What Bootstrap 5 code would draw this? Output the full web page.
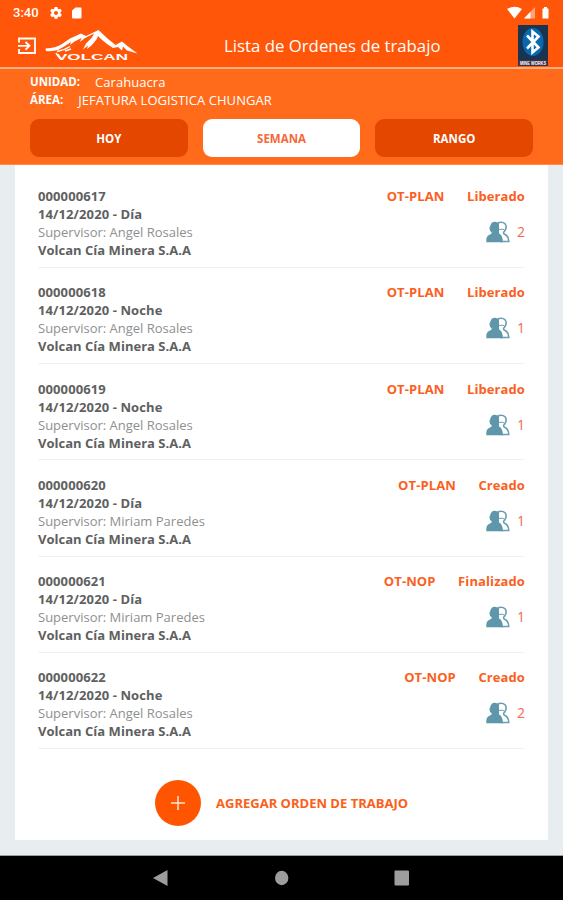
<!DOCTYPE html>
<html lang="es">
<head>
<meta charset="utf-8">
<meta name="viewport" content="width=device-width, initial-scale=1">
<title>Lista de Ordenes de trabajo</title>
<link rel="stylesheet" href="https://cdn.jsdelivr.net/npm/bootstrap@5.3.0/dist/css/bootstrap.min.css">
<style>
body{font-family:"Open Sans","Noto Sans",sans-serif;font-size:13px;line-height:18px;background:#e8eeef;height:900px;overflow:hidden}
svg{display:block;flex:none}
.topbar{background:#ff560a;height:69px;border-bottom:2px solid #ffae84}
.status{height:24px;padding:1px 13px 0;font:500 13px/22px Roboto,sans-serif}
.titlebar{height:43px;padding:0 14px 0 17px}
.titlebar h1{font-size:16.8px;line-height:22px;margin:0 0 0 85px;font-weight:400}
.logo{margin-left:8px}
.filters{background:#ff6b1a;height:96px;padding:4px 30px 0;border-bottom:1px solid #ff8a4c}
.filters .info b{font-size:11.5px}
.filters .info span{margin-left:15px;margin-top:-.5px;letter-spacing:.05px}
.btns{gap:15px;margin-top:10px}
.filters .btn{height:38px;border-radius:9px;border:0;background:#e44700;color:#fff;font-size:11.5px;font-weight:700;padding:2px 0 0}
.filters .btn.active{background:#fff;color:#f4683a}
.sheet{background:#fff;height:675px;margin:0 15px;padding:7px 23px 0}
.order{height:96.15px;padding-top:15.3px;border-bottom:1px solid #f1f1f2;color:#606060}
.order b{letter-spacing:.1px}
.order .firm{letter-spacing:.02px}
.sup{color:#8f8f8f}
.tone{color:#fb6022}
.tags{gap:22.5px;letter-spacing:.1px}
.count{color:#f4694a;font-size:14px;margin-top:16px;height:22px}
.people{margin-right:7px}
.add{gap:15px;margin-top:31px;height:46px;padding-left:117px;color:#fb6018;font-weight:700;font-size:13px}
.plus{width:46px;height:46px;background:#ff5500}
.navkeys{background:#000;height:45px;margin-top:15px;border-top:1px solid #9ba0a1}
</style>
<script src="https://cdn.jsdelivr.net/npm/bootstrap@5.3.0/dist/js/bootstrap.bundle.min.js"></script>
</head>
<body>
<header class="topbar text-white">
  <div class="status d-flex align-items-center">
    <span>3:40</span>
    <svg class="ms-2" width="62" height="14" viewBox="-2 0 62 14" fill="#fff"><path fill-rule="evenodd" d="M5.600 1h2.800l.4 1.700 1 .6 1.700-.6 1.300 2.300-1.300 1.300v1.200l1.300 1.300-1.300 2.300-1.700-.6-1 .6-.4 1.700H5.600l-.4-1.700-1-.6-1.700.6-1.300-2.300 1.300-1.300V6.300L1.200 5l1.300-2.300 1.700.6 1-.6zM7 4.900a2 2 0 1 0 .01 0z"/><path d="M26.500 1.500h5q1 0 1 1v9q0 1-1 1h-7.500q-1 0-1-1V4.500z"/></svg>
    <svg class="ms-auto" width="44" height="14" viewBox="-1 0 44 14" fill="#fff"><path d="M0 3Q7.500-1.500 15 3L7.500 12.500z"/><path fill-opacity=".45" d="M28 1v11.500H17z"/><path d="M23.500 5.700v6.800H17z"/><path d="M35.500 2.500H37V1h3v1.500h1.500v10h-6z"/></svg>
  </div>
  <div class="titlebar d-flex align-items-center">
    <svg width="20" height="20" viewBox="0 0 20 20" fill="none" stroke="#fff" stroke-width="1.800"><path d="M2 6.500V2.500h16v14.500H2V13"/><path d="M1 9.800h11M8.500 6l4 3.800-4 3.800"/></svg>
    <svg class="logo" width="94" height="34" viewBox="45 29 94 34" fill="#fff"><path d="M45.500 48.500Q56 48 62 44L70 38.500 81 33.500l5 2.500L98.500 30l9 8.500 8 6.500 6.500-3.500 6 5 9.500 7-10.500-3-4-4-1 4-4-3.500-5 1-6-4-6-5-3-3-1.500 3.500-5 6-4.500 3.500 1-3.500-5 4 3-6 6-6 2-4-9 4.500-5 4 1.500-4-7 3.500-4.500 3.500 1-3-6 4-7 4q-5 1.500-12 1z"/><path d="M57 51.500q7-1 13-5M56 53q2 4 6 6M65 51l6-2" fill="none" stroke="#fff" stroke-width="1.500"/><text x="56" y="60" font-family="Liberation Sans, sans-serif" font-size="8.500" font-weight="700" textLength="72" lengthAdjust="spacingAndGlyphs">VOLCAN</text></svg>
    <h1>Lista de Ordenes de trabajo</h1>
    <svg class="ms-auto" width="32" height="41" viewBox="0 0 32 41"><path fill="#193451" d="M1 0h30v41H1z"/><ellipse cx="16" cy="17" rx="10.500" ry="14" fill="#0868b0"/><path d="M10 10.500L21.500 22.500l-6 5V6.500l6 5L10 23.500" fill="none" stroke="#fff" stroke-width="2.600"/><path fill="#403044" d="M1 35h30v6H1z"/><text x="3" y="39.800" fill="#fff" font-family="Liberation Sans, sans-serif" font-size="4.500" font-weight="700" textLength="26" lengthAdjust="spacingAndGlyphs">MINE WORKS</text></svg>
  </div>
</header>
<section class="filters text-white">
  <div class="info d-flex"><b>UNIDAD:</b><span>Carahuacra</span></div>
  <div class="info d-flex"><b>ÁREA:</b><span>JEFATURA LOGISTICA CHUNGAR</span></div>
  <div class="btns d-flex">
    <button class="btn flex-fill w-100">HOY</button><button class="btn flex-fill w-100 active">SEMANA</button><button class="btn flex-fill w-100">RANGO</button>
  </div>
</section>
<main class="sheet">
  <svg class="d-none"><symbol id="people" viewBox="0 0 24 22"><path d="M12 1.800q4.500-1.500 7 1 2 2.700.5 5.700-.8 2-2 2.800 0 1.700 1.500 2.200 3.500 1.500 3.800 7H14" fill="#fff" stroke="#6a9fb1" stroke-width="1.600"/><path d="M13 8.500q3.500-1 5.500.5" fill="none" stroke="#6a9fb1"/><path fill="#6096aa" d="M.3 21.300v-2.500q0-4.300 4.700-5.800 1-.5.500-2-2.200-1.200-2-3.500-.2-1.500.8-2.500Q5 .8 9 .7q2.300 0 4 1.500v10.300q3.700 1.500 4 8.800z"/></symbol></svg>
  <div id="orders"></div>
  <div class="add d-flex align-items-center"><div class="plus rounded-circle d-flex align-items-center justify-content-center"><svg width="14" height="14" viewBox="0 0 14 14" stroke="#ffe3d6" stroke-width="1.500"><path d="M7 0v14M0 7h14"/></svg></div><span>AGREGAR ORDEN DE TRABAJO</span></div>
</main>
<footer class="navkeys"><svg width="563" height="44" viewBox="0 0 563 44" fill="#9d9d9d"><path d="M153 22l14.500-8v16z"/><ellipse cx="281.700" cy="22" rx="6.700" ry="7.200"/><rect x="394.500" y="14.500" width="14.500" height="15" rx="1"/></svg></footer>
<script>
const orders=[["617","Día","Angel Rosales","OT-PLAN","Liberado",2],["618","Noche","Angel Rosales","OT-PLAN","Liberado",1],["619","Noche","Angel Rosales","OT-PLAN","Liberado",1],["620","Día","Miriam Paredes","OT-PLAN","Creado",1],["621","Día","Miriam Paredes","OT-NOP","Finalizado",1],["622","Noche","Angel Rosales","OT-NOP","Creado",2]];
document.getElementById("orders").innerHTML=orders.map(([n,t,s,k,e,c])=>`<div class="order d-flex justify-content-between"><div class="d-flex flex-column"><b>000000${n}</b><b>14/12/2020 - ${t}</b><span class="sup">Supervisor: ${s}</span><b class="firm">Volcan Cía Minera S.A.A</b></div><div class="d-flex flex-column align-items-end"><div class="tags tone fw-bold d-flex"><span>${k}</span><span>${e}</span></div><div class="count d-flex align-items-center"><svg class="people" width="24" height="22"><use href="#people"/></svg>${c}</div></div></div>`).join("");
</script>
</body>
</html>
